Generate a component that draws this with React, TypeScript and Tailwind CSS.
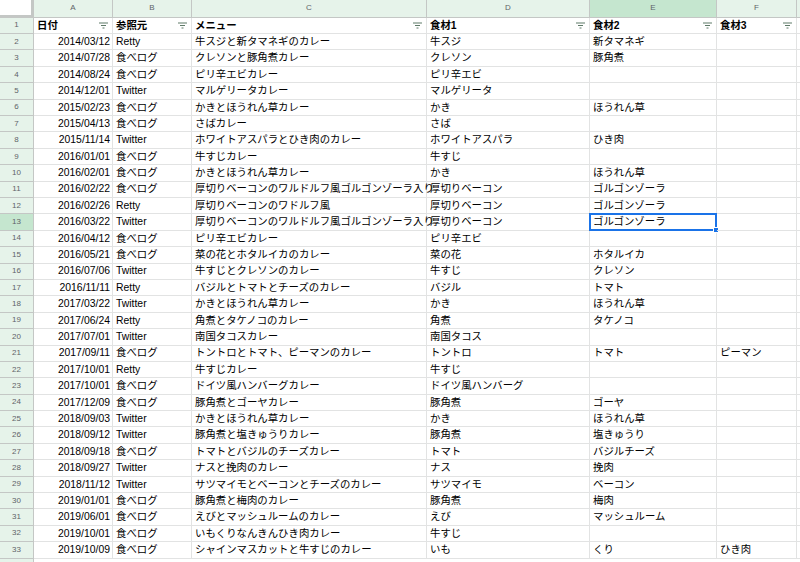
import React from 'react';

type Row = [string, string, string, string, string, string];

const rows: Row[] = [
  ['2014/03/12', 'Retty', '牛スジと新タマネギのカレー', '牛スジ', '新タマネギ', ''],
  ['2014/07/28', '食べログ', 'クレソンと豚角煮カレー', 'クレソン', '豚角煮', ''],
  ['2014/08/24', '食べログ', 'ピリ辛エビカレー', 'ピリ辛エビ', '', ''],
  ['2014/12/01', 'Twitter', 'マルゲリータカレー', 'マルゲリータ', '', ''],
  ['2015/02/23', '食べログ', 'かきとほうれん草カレー', 'かき', 'ほうれん草', ''],
  ['2015/04/13', '食べログ', 'さばカレー', 'さば', '', ''],
  ['2015/11/14', 'Twitter', 'ホワイトアスパラとひき肉のカレー', 'ホワイトアスパラ', 'ひき肉', ''],
  ['2016/01/01', '食べログ', '牛すじカレー', '牛すじ', '', ''],
  ['2016/02/01', '食べログ', 'かきとほうれん草カレー', 'かき', 'ほうれん草', ''],
  ['2016/02/22', '食べログ', '厚切りベーコンのワルドルフ風ゴルゴンゾーラ入り', '厚切りベーコン', 'ゴルゴンゾーラ', ''],
  ['2016/02/26', 'Retty', '厚切りベーコンのワドルフ風', '厚切りベーコン', 'ゴルゴンゾーラ', ''],
  ['2016/03/22', 'Twitter', '厚切りベーコンのワルドルフ風ゴルゴンゾーラ入り', '厚切りベーコン', 'ゴルゴンゾーラ', ''],
  ['2016/04/12', '食べログ', 'ピリ辛エビカレー', 'ピリ辛エビ', '', ''],
  ['2016/05/21', '食べログ', '菜の花とホタルイカのカレー', '菜の花', 'ホタルイカ', ''],
  ['2016/07/06', 'Twitter', '牛すじとクレソンのカレー', '牛すじ', 'クレソン', ''],
  ['2016/11/11', 'Retty', 'バジルとトマトとチーズのカレー', 'バジル', 'トマト', ''],
  ['2017/03/22', 'Twitter', 'かきとほうれん草カレー', 'かき', 'ほうれん草', ''],
  ['2017/06/24', 'Retty', '角煮とタケノコのカレー', '角煮', 'タケノコ', ''],
  ['2017/07/01', 'Twitter', '南国タコスカレー', '南国タコス', '', ''],
  ['2017/09/11', '食べログ', 'トントロとトマト、ピーマンのカレー', 'トントロ', 'トマト', 'ピーマン'],
  ['2017/10/01', 'Retty', '牛すじカレー', '牛すじ', '', ''],
  ['2017/10/01', '食べログ', 'ドイツ風ハンバーグカレー', 'ドイツ風ハンバーグ', '', ''],
  ['2017/12/09', '食べログ', '豚角煮とゴーヤカレー', '豚角煮', 'ゴーヤ', ''],
  ['2018/09/03', 'Twitter', 'かきとほうれん草カレー', 'かき', 'ほうれん草', ''],
  ['2018/09/12', 'Twitter', '豚角煮と塩きゅうりカレー', '豚角煮', '塩きゅうり', ''],
  ['2018/09/18', '食べログ', 'トマトとバジルのチーズカレー', 'トマト', 'バジルチーズ', ''],
  ['2018/09/27', 'Twitter', 'ナスと挽肉のカレー', 'ナス', '挽肉', ''],
  ['2018/11/12', 'Twitter', 'サツマイモとベーコンとチーズのカレー', 'サツマイモ', 'ベーコン', ''],
  ['2019/01/01', '食べログ', '豚角煮と梅肉のカレー', '豚角煮', '梅肉', ''],
  ['2019/06/01', '食べログ', 'えびとマッシュルームのカレー', 'えび', 'マッシュルーム', ''],
  ['2019/10/01', '食べログ', 'いもくりなんきんひき肉カレー', '牛すじ', '', ''],
  ['2019/10/09', '食べログ', 'シャインマスカットと牛すじのカレー', 'いも', 'くり', 'ひき肉'],
];

const widths = ['w-[79px]', 'w-[79px]', 'w-[235px]', 'w-[163px]', 'w-[127px]', 'w-[80px]'];
const letters = ['A', 'B', 'C', 'D', 'E', 'F'];
const titles = ['日付', '参照元', 'メニュー', '食材1', '食材2', '食材3'];

function FilterIcon() {
  return (
    <svg width="9" height="7" viewBox="0 0 9 7" className="shrink-0">
      <path d="M0 1h9M2 3.5h5M3.5 6h2" stroke="#5f7a68" strokeWidth="1" />
    </svg>
  );
}

export default function App() {
  return (
    <div
      className="w-[800px] h-[562px] overflow-hidden bg-white text-[10.4px] text-black"
      style={{ fontFamily: '"Liberation Sans", "Noto Sans CJK JP", sans-serif' }}
    >
      {/* column letters */}
      <div className="flex h-[17.7px]">
        <div className="w-[34px] shrink-0 bg-white border-r-[3px] border-b-[3px] border-[#c4c7c5]" />
        {letters.map((l, i) => (
          <div
            key={l}
            className={`${widths[i]} shrink-0 flex items-center justify-center border-r border-b border-[#c4c7c5] text-[8px] text-[#5f6368] ${
              l === 'E' ? 'bg-[#c5e6cf]' : 'bg-[#e6f3ea]'
            }`}
          >
            {l}
          </div>
        ))}
        <div className="flex-1 bg-[#e6f3ea] border-b border-[#c4c7c5]" />
      </div>

      {/* header row 1 */}
      <div className="flex h-[16.4px]">
        <div className="w-[34px] shrink-0 flex items-center justify-center bg-[#e6f3ea] border-r border-b border-[#c4c7c5] text-[8px] text-[#5f6368]">
          1
        </div>
        {titles.map((t, i) => (
          <div
            key={t}
            className={`${widths[i]} shrink-0 flex items-center justify-between pl-[3px] pr-[4px] border-r border-b border-[#e2e3e3] font-bold`}
          >
            <span>{t}</span>
            <FilterIcon />
          </div>
        ))}
        <div className="flex-1 border-b border-[#e2e3e3]" />
      </div>

      {rows.map((r, ri) => {
        const n = ri + 2;
        const active = n === 13;
        return (
          <div key={n} className={`flex h-[16.4px] ${active ? 'relative z-10' : ''}`}>
            <div
              className={`w-[34px] shrink-0 flex items-center justify-center border-r border-b border-[#c4c7c5] text-[8px] text-[#5f6368] ${
                active ? 'bg-[#c5e6cf]' : 'bg-[#e6f3ea]'
              }`}
            >
              {n}
            </div>
            {r.map((c, ci) => {
              const selected = active && ci === 4;
              return (
                <div
                  key={ci}
                  className={`${widths[ci]} shrink-0 relative flex items-center whitespace-nowrap overflow-visible border-r border-b border-[#e2e3e3] ${
                    ci === 0 ? 'justify-end pr-[2px]' : 'pl-[3px]'
                  }`}
                >
                  <span>{c}</span>
                  {selected && (
                    <>
                      <div className="absolute -left-px -top-px -right-px -bottom-px border-2 border-[#1a73e8]" />
                      <div className="absolute -right-[3px] -bottom-[3px] w-[6px] h-[6px] bg-[#1a73e8] border border-white" />
                    </>
                  )}
                </div>
              );
            })}
            <div className="flex-1 border-b border-[#e2e3e3]" />
          </div>
        );
      })}
      <div className="flex h-[16.4px]">
        <div className="w-[34px] shrink-0 bg-[#e6f3ea] border-r border-[#c4c7c5]" />
      </div>
    </div>
  );
}
